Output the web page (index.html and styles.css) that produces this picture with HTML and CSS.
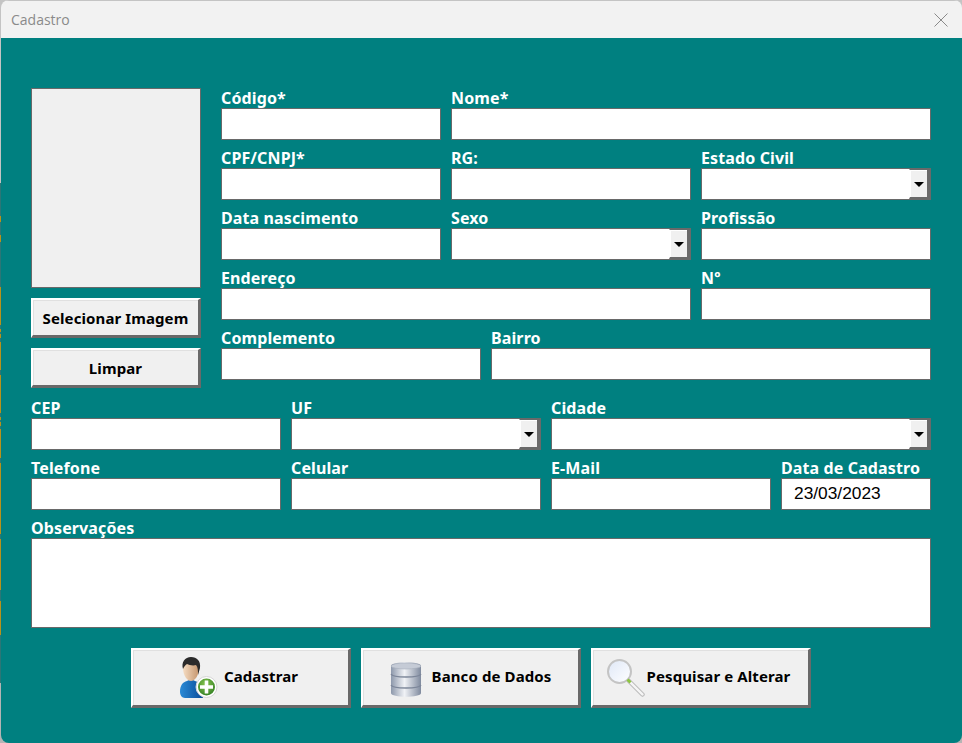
FILE: index.html
```html
<!DOCTYPE html>
<html lang="pt-BR">
<head>
<meta charset="utf-8">
<title>Cadastro</title>
<link rel="stylesheet" href="styles.css">
</head>
<body>
<div class="window">
  <header class="titlebar">
    <span class="title">Cadastro</span>
    <svg class="close" width="14" height="14" viewBox="0 0 14 14"><path d="M.5.5l13 13M13.500.5l-13 13" stroke="#8a8a8a" fill="none"/></svg>
  </header>
  <main class="form">
    <section class="upper">
      <div class="photo-col">
        <div class="photo"></div>
        <button class="btn btn-side">Selecionar Imagem</button>
        <button class="btn btn-side">Limpar</button>
      </div>
      <div class="grid-upper">
        <label class="field"><span>Código*</span><div class="box"></div></label>
        <label class="field s3"><span>Nome*</span><div class="box"></div></label>
        <label class="field"><span>CPF/CNPJ*</span><div class="box"></div></label>
        <label class="field s2"><span>RG:</span><div class="box"></div></label>
        <label class="field"><span>Estado Civil</span><div class="box combo"><i class="drop"></i></div></label>
        <label class="field"><span>Data nascimento</span><div class="box"></div></label>
        <label class="field s2"><span>Sexo</span><div class="box combo"><i class="drop"></i></div></label>
        <label class="field"><span>Profissão</span><div class="box"></div></label>
        <label class="field s3"><span>Endereço</span><div class="box"></div></label>
        <label class="field"><span>Nº</span><div class="box"></div></label>
        <label class="field s2"><span>Complemento</span><div class="box"></div></label>
        <label class="field s2"><span>Bairro</span><div class="box"></div></label>
      </div>
    </section>
    <section class="grid-lower">
      <label class="field"><span>CEP</span><div class="box"></div></label>
      <label class="field"><span>UF</span><div class="box combo"><i class="drop"></i></div></label>
      <label class="field s2"><span>Cidade</span><div class="box combo"><i class="drop"></i></div></label>
      <label class="field"><span>Telefone</span><div class="box"></div></label>
      <label class="field"><span>Celular</span><div class="box"></div></label>
      <label class="field"><span>E-Mail</span><div class="box"></div></label>
      <label class="field"><span>Data de Cadastro</span><div class="box value">23/03/2023</div></label>
      <label class="field s4"><span>Observações</span><div class="box memo"></div></label>
    </section>
    <section class="actions">
      <button class="btn btn-main gap-user">
        <svg class="ico" width="38" height="41" viewBox="0 0 38 41">
          <defs>
            <linearGradient id="skin" x1="0" x2="1"><stop offset="0" stop-color="#f5dcc2"/><stop offset="1" stop-color="#c4946c"/></linearGradient>
            <linearGradient id="shirt" x1="0" x2="1"><stop offset="0" stop-color="#2a8ad6"/><stop offset="1" stop-color="#0a4c98"/></linearGradient>
            <radialGradient id="green" cx=".45" cy=".35" r=".7"><stop offset="0" stop-color="#8cc751"/><stop offset="1" stop-color="#2f7d22"/></radialGradient>
          </defs>
          <path d="M0 35c0-7 3-10 7-11l4-2 4 2 5 2 3 4v11H5c-3 0-5-3-5-6z" fill="url(#shirt)"/>
          <path d="M3 11C3 5 6 2 11 2s8 3 8 9c0 7-4 13-8 13s-8-6-8-13z" fill="url(#skin)"/>
          <path d="M3 12C1 5 5 0 11 0c6 0 10 4 9 11l-2 7c0-4 0-8-2-10-3 1-7 0-9-1-2 1-3 3-4 5z" fill="#2b2b2b"/>
          <circle cx="26.500" cy="30" r="10.500" fill="#fff" stroke="#d4d4d4"/>
          <circle cx="26.500" cy="30" r="8.500" fill="url(#green)"/>
          <path d="M24.700 23.500h3.600v4.700H33v3.600h-4.700v4.700h-3.600v-4.700H20v-3.600h4.700z" fill="#fff"/>
        </svg>
        <b>Cadastrar</b>
      </button>
      <button class="btn btn-main gap-db">
        <svg class="ico ico-db" width="32" height="35" viewBox="0 0 32 35">
          <defs>
            <linearGradient id="metal" x1="0" x2="1"><stop offset="0" stop-color="#8d98ab"/><stop offset=".45" stop-color="#f0f2f6"/><stop offset="1" stop-color="#7f8a9e"/></linearGradient>
          </defs>
          <path d="M1 4c0-5 30-5 30 0v27c0 5-30 5-30 0z" fill="url(#metal)"/>
          <ellipse cx="16" cy="4" rx="15" ry="3" fill="#c5cbd6" stroke="#a5adbb" stroke-width=".6"/>
          <path d="M1 12c2 4 28 4 30 0M1 23c2 4 28 4 30 0" fill="none" stroke="#7c8699" stroke-width="1.400"/>
        </svg>
        <b>Banco de Dados</b>
      </button>
      <button class="btn btn-main gap-search">
        <svg class="ico" width="38" height="38" viewBox="0 0 38 38">
          <defs>
            <linearGradient id="lens" x1="0" y1="0" x2="1" y2="1"><stop offset="0" stop-color="#dfe8f7"/><stop offset="1" stop-color="#ffffff"/></linearGradient>
          </defs>
          <circle cx="12.500" cy="12.500" r="11.500" fill="url(#lens)" stroke="#c4c4c4" stroke-width="2"/>
          <path d="M22 22l13.500 13.500" stroke="#bdbdbd" stroke-width="4.500" stroke-linecap="round"/>
          <path d="M23 23l12.500 12.500" stroke="#f6f6f6" stroke-width="2.400" stroke-linecap="round"/>
          <path d="M19.500 21.500l2-2 3 3-2 2z" fill="#8dc63f"/>
        </svg>
        <b>Pesquisar e Alterar</b>
      </button>
    </section>
  </main>
</div>
</body>
</html>
```
FILE: styles.css
```css
* { box-sizing: border-box; }
html, body { margin: 0; height: 100%; }
body {
  overflow: hidden;
  background: linear-gradient(to bottom,
    #c4c4c4 0 183px, #2c7676 183px 216px, #b8921a 216px 222px, #2c7676 222px 235px, #b8921a 235px 242px,
    #2c7676 242px 287px, #b8921a 287px 325px, #2c7676 325px 329px, #b8921a 329px 332px, #2c7676 332px 334px,
    #b8921a 334px 338px, #2c7676 338px 342px, #b8921a 342px 370px, #2c7676 370px 375px, #b8921a 375px 413px,
    #2c7676 413px 417px, #b8921a 417px 420px, #2c7676 420px 422px, #b8921a 422px 426px, #2c7676 426px 429px,
    #b8921a 429px 458px, #2c7676 458px 463px, #b8921a 463px 534px, #2c7676 534px 539px, #b8921a 539px 590px,
    #2c7676 590px 601px, #b8921a 601px 635px, #2c7676 635px 683px, #b4b4b4 683px);
}
.window { width: 961px; height: 743px; margin-left: 1px; display: flex; flex-direction: column; border-radius: 8px; overflow: hidden; }
.titlebar { height: 38px; flex: none; background: #f2f2f2; display: flex; align-items: center; justify-content: space-between; padding: 0 14px 0 10px; border-top: 1px solid #c4c4c4; }
.title { font: 14px "Open Sans", "Liberation Sans", sans-serif; color: #8a8a8a; }
.form { flex: 1; background: #008080; padding: 50px 30px 0; }
.upper { display: flex; gap: 20px; }
.photo-col { width: 170px; display: flex; flex-direction: column; }
.photo { height: 200px; background: #f0f0f0; border: 1px solid #696969; }
.grid-upper { display: grid; grid-template-columns: 220px 30px 200px 230px; column-gap: 10px; row-gap: 8px; grid-auto-rows: 52px; }
.grid-lower { display: grid; grid-template-columns: 250px 250px 220px 150px; column-gap: 10px; row-gap: 8px; margin-top: 10px; }
.field { display: flex; flex-direction: column; min-width: 0; }
.field > span { height: 20px; font: bold 16px/20px "Noto Sans", "DejaVu Sans", sans-serif; letter-spacing: .12px; color: #fff; white-space: nowrap; }
.s2 { grid-column: span 2; }
.s3 { grid-column: span 3; }
.s4 { grid-column: span 4; }
.box { height: 32px; background: #fff; border: 1px solid #696969; position: relative; }
.value { font: 17.33px/29px "Liberation Sans", sans-serif; color: #000; padding-left: 12px; }
.memo { height: 90px; }
.combo { border-right-width: 2px; }
.drop { position: absolute; right: 0; top: 0; bottom: 0; width: 20px; background: #f0f0f0; border-style: solid; border-width: 1px 2px 2px 1px; border-color: #696969 #696969 #696969 #fff; box-shadow: inset 1px 1px 0 #fff; display: flex; align-items: center; justify-content: center; }
.drop::after { content: ""; border-style: solid; border-width: 5px 5px 0; border-color: #000 transparent transparent; margin-top: 2px; }
.btn { background: #f0f0f0; border-style: solid; border-width: 2px 3px 3px 2px; border-color: #fff #696969 #696969 #fff; box-shadow: inset 1px 1px 0 #e0e0e0; display: flex; align-items: center; justify-content: center; padding: 0; color: #000; font: bold 15px "Noto Sans", "DejaVu Sans", sans-serif; letter-spacing: .1px; }
.btn-side { height: 40px; margin-top: 10px; }
.actions { display: flex; gap: 10px; margin: 20px 0 0 100px; }
.btn-main { width: 220px; height: 60px; }
.btn-main b { font-weight: bold; padding-bottom: 3px; }
.gap-user { gap: 6px; padding-right: 3px; }
.gap-db { gap: 10px; }
.gap-search { gap: 2px; padding-right: 4px; }
.ico { flex: none; }
.ico-db { margin-top: 4px; }
```
